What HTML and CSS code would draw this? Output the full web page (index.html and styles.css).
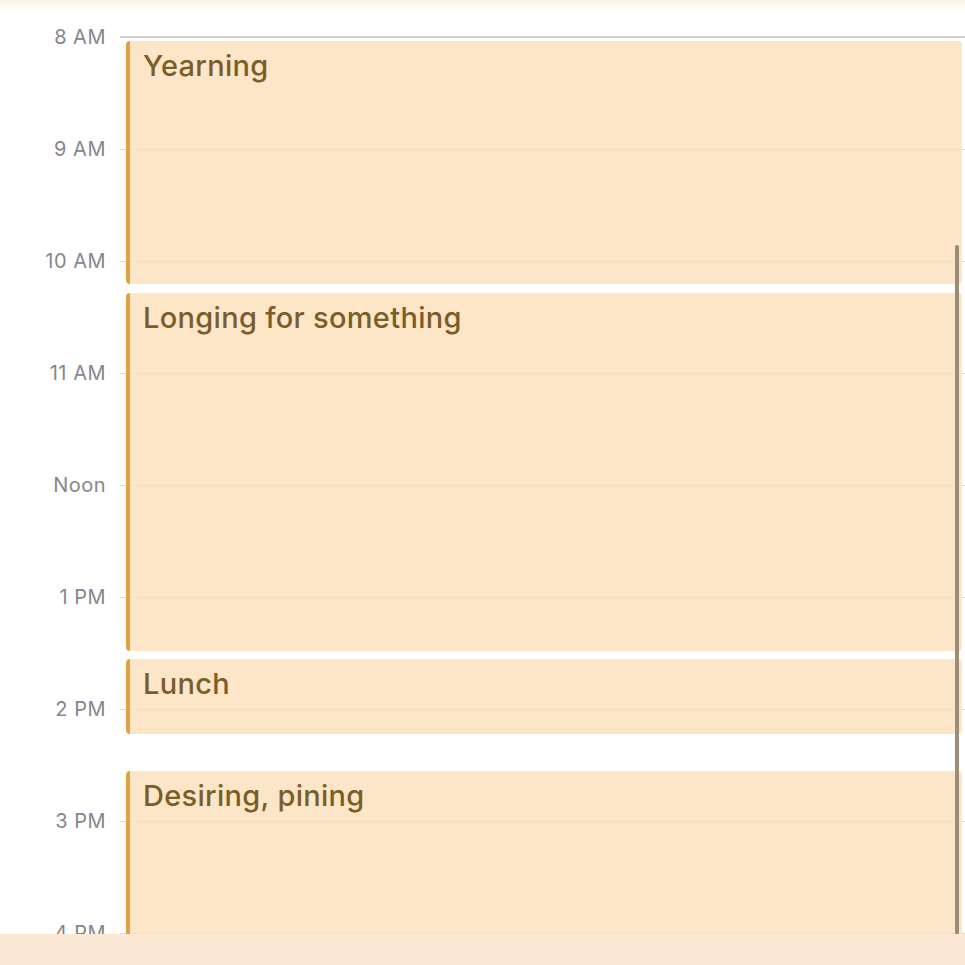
FILE: index.html
```html
<!DOCTYPE html>
<html>
<head>
<meta charset="utf-8">
<link rel="stylesheet" href="styles.css">
</head>
<body>
<div class="top-strip"></div>
<div class="day">
  <div class="hour"><span class="label">8 AM</span><span class="line line-top"></span></div>
  <div class="hour"><span class="label">9 AM</span><span class="line"></span></div>
  <div class="hour"><span class="label">10 AM</span><span class="line"></span></div>
  <div class="hour"><span class="label">11 AM</span><span class="line"></span></div>
  <div class="hour"><span class="label">Noon</span><span class="line"></span></div>
  <div class="hour"><span class="label">1 PM</span><span class="line"></span></div>
  <div class="hour"><span class="label">2 PM</span><span class="line"></span></div>
  <div class="hour"><span class="label">3 PM</span><span class="line"></span></div>
  <div class="hour"><span class="label">4 PM</span><span class="line"></span></div>

  <div class="event ev-yearning"><span class="title">Yearning</span></div>
  <div class="event ev-longing"><span class="title">Longing for something</span></div>
  <div class="event ev-lunch"><span class="title">Lunch</span></div>
  <div class="event ev-desiring"><span class="title">Desiring, pining</span></div>

  <div class="scrollbar"></div>
</div>
<div class="bottom-bar"></div>
</body>
</html>
```
FILE: styles.css
```css
html, body {
  margin: 0;
  padding: 0;
  background: #ffffff;
  overflow: hidden;
  height: 965px;
}
body {
  font-family: "Inter", "Liberation Sans", sans-serif;
}
.top-strip {
  height: 37px;
  background: linear-gradient(#fbf3ea 0px, #fefcf9 8px, #ffffff 14px);
}
.day {
  position: relative;
  height: 928px;
}
.hour {
  display: grid;
  grid-template-columns: 106px 1fr;
  height: 112px;
  align-items: start;
}
.label {
  display: block;
  text-align: right;
  font-size: 20px;
  letter-spacing: 0.5px;
  line-height: 24px;
  margin-top: -12px;
  color: #86868b;
}
.line {
  display: block;
  margin-left: 14px;
  border-top: 1px solid #dcdcdc;
}
.line-top {
  border-top: 2px solid #cfcfd2;
  margin-top: -1px;
}
.event {
  position: absolute;
  left: 126px;
  right: 3px;
  background: rgba(253, 222, 186, 0.8);
  border-left: 4px solid #e3a23f;
  border-radius: 4px;
  padding: 7px 13px;
  box-sizing: border-box;
}
.title {
  font-size: 29px;
  font-weight: 500;
  letter-spacing: 0.3px;
  color: #7a5e2a;
  line-height: 36px;
}
.ev-yearning { top: 4px; height: 243px; }
.ev-longing { top: 256px; height: 358px; }
.ev-lunch { top: 622px; height: 75px; }
.ev-desiring { top: 734px; height: 300px; }
.scrollbar {
  position: absolute;
  left: 955px;
  top: 208px;
  width: 4px;
  height: 690px;
  border-radius: 2px;
  background: #9c8c7a;
}
.bottom-bar {
  position: fixed;
  left: 0;
  right: 0;
  bottom: 0;
  height: 31px;
  background: #fbe9d6;
}
```
